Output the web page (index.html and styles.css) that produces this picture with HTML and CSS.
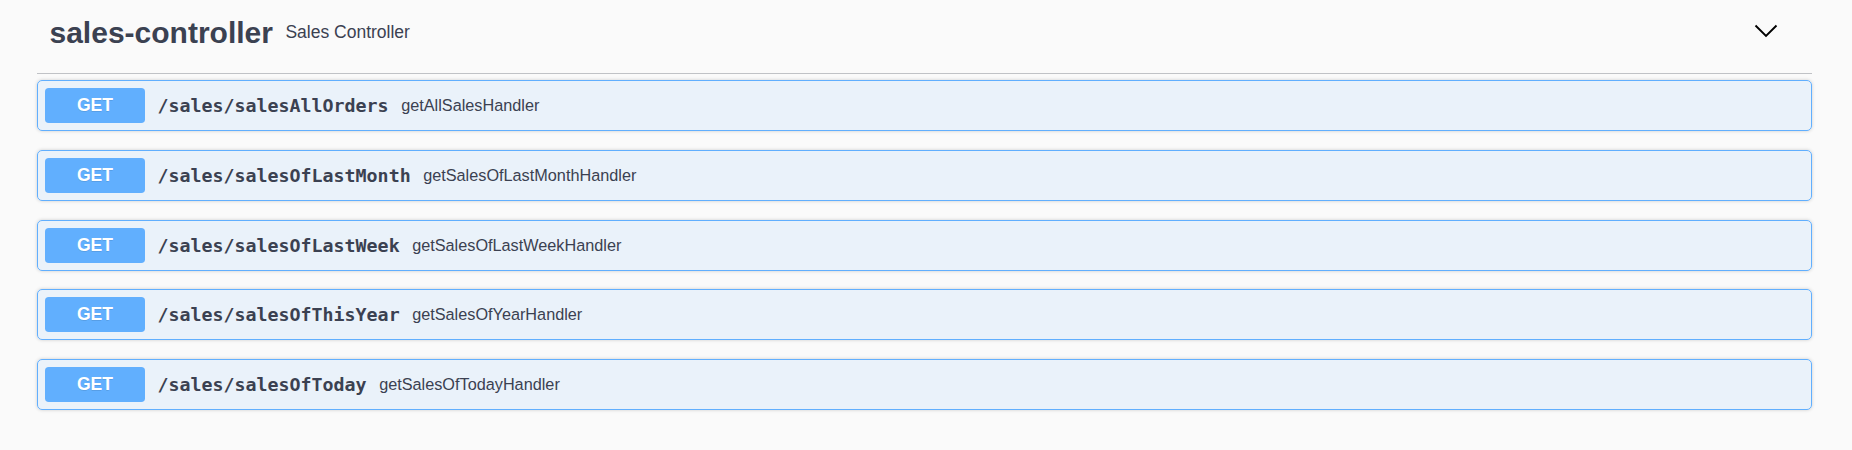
FILE: index.html
```html
<!DOCTYPE html>
<html lang="en">
<head>
<meta charset="utf-8">
<title>sales-controller</title>
<link rel="stylesheet" href="styles.css">
</head>
<body>
<div class="wrapper">
  <section class="tag-section">
    <h3 class="tag">
      <span class="tag-name">sales-controller</span>
      <small class="tag-desc">Sales Controller</small>
      <svg class="chevron" width="24" height="14" viewBox="0 0 24 14" aria-hidden="true">
        <polyline points="1.5,1.5 12,12 22.5,1.5" fill="none" stroke="#000" stroke-width="1.9"/>
      </svg>
    </h3>
    <div class="ops">
      <div class="opblock">
        <span class="method">GET</span>
        <span class="path">/sales/salesAllOrders</span>
        <span class="summary">getAllSalesHandler</span>
      </div>
      <div class="opblock">
        <span class="method">GET</span>
        <span class="path">/sales/salesOfLastMonth</span>
        <span class="summary">getSalesOfLastMonthHandler</span>
      </div>
      <div class="opblock">
        <span class="method">GET</span>
        <span class="path">/sales/salesOfLastWeek</span>
        <span class="summary">getSalesOfLastWeekHandler</span>
      </div>
      <div class="opblock">
        <span class="method">GET</span>
        <span class="path">/sales/salesOfThisYear</span>
        <span class="summary">getSalesOfYearHandler</span>
      </div>
      <div class="opblock">
        <span class="method">GET</span>
        <span class="path">/sales/salesOfToday</span>
        <span class="summary">getSalesOfTodayHandler</span>
      </div>
    </div>
  </section>
</div>
</body>
</html>
```

FILE: styles.css
```css
html, body {
  margin: 0;
  padding: 0;
  background: #fafafa;
}

body {
  font-family: "Liberation Sans", Arial, sans-serif;
  color: #3b4151;
}

.wrapper {
  padding: 0 40px 0 37px;
}

.tag {
  display: flex;
  align-items: center;
  margin: 0;
  padding: 15.5px 34px 23.5px 12.5px;
  border-bottom: 1px solid rgba(59, 65, 81, 0.3);
  height: 34px;
}

.tag-name {
  font-size: 30px;
  font-weight: 700;
  line-height: 34px;
  color: #3b4151;
}

.tag-desc {
  flex: 1;
  margin-left: 12.5px;
  font-size: 17.5px;
  font-weight: 400;
  color: #3b4151;
}

.chevron {
  display: block;
  margin-bottom: 4px;
}

.ops {
  padding-top: 6px;
}

.opblock {
  display: flex;
  align-items: center;
  padding: 7px;
  margin-bottom: 18.75px;
  border: 1px solid #61affe;
  border-radius: 5px;
  background: rgba(97, 175, 254, 0.1);
  box-shadow: 0 0 3.75px rgba(0, 0, 0, 0.19);
}

.method {
  display: flex;
  align-items: center;
  justify-content: center;
  min-width: 100px;
  height: 35px;
  border-radius: 3.75px;
  background: #61affe;
  color: #fff;
  font-size: 17.5px;
  font-weight: 700;
  text-shadow: 0 1px 0 rgba(0, 0, 0, 0.1);
}

.path {
  padding: 0 12.5px 0 12.5px;
  font-family: "DejaVu Sans Mono", "Liberation Mono", monospace;
  font-size: 18.3px;
  font-weight: 700;
  color: #3b4151;
}

.summary {
  font-size: 16.25px;
  color: #3b4151;
}
```
